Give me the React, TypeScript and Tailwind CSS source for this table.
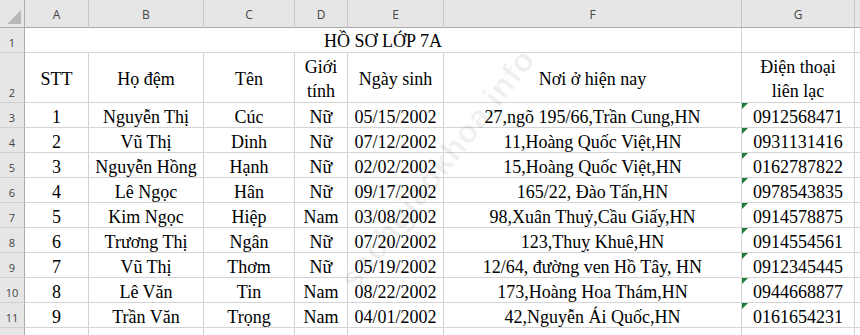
import React from 'react';

const cols = ['A', 'B', 'C', 'D', 'E', 'F', 'G'];

const rows = [
  ['1', 'Nguyễn Thị', 'Cúc', 'Nữ', '05/15/2002', '27,ngõ 195/66,Trần Cung,HN', '0912568471'],
  ['2', 'Vũ Thị', 'Dinh', 'Nữ', '07/12/2002', '11,Hoàng Quốc Việt,HN', '0931131416'],
  ['3', 'Nguyễn Hồng', 'Hạnh', 'Nữ', '02/02/2002', '15,Hoàng Quốc Việt,HN', '0162787822'],
  ['4', 'Lê Ngọc', 'Hân', 'Nữ', '09/17/2002', '165/22, Đào Tấn,HN', '0978543835'],
  ['5', 'Kim Ngọc', 'Hiệp', 'Nam', '03/08/2002', '98,Xuân Thuỷ,Cầu Giấy,HN', '0914578875'],
  ['6', 'Trương Thị', 'Ngân', 'Nữ', '07/20/2002', '123,Thuỵ Khuê,HN', '0914554561'],
  ['7', 'Vũ Thị', 'Thơm', 'Nữ', '05/19/2002', '12/64, đường ven Hồ Tây, HN', '0912345445'],
  ['8', 'Lê Văn', 'Tin', 'Nam', '08/22/2002', '173,Hoàng Hoa Thám,HN', '0944668877'],
  ['9', 'Trần Văn', 'Trọng', 'Nam', '04/01/2002', '42,Nguyễn Ái Quốc,HN', '0161654231'],
];

function RowHead({ n, h }: { n: string; h: string }) {
  return (
    <div
      className={`${h} flex items-end justify-center pb-[4px] bg-[#e6e6e6] border-r border-r-[#ababab] border-b border-b-[#d0d0d0] text-[11px] leading-none text-[#444] font-['Open_Sans',sans-serif]`}
    >
      {n}
    </div>
  );
}

function Cell({ children, flag }: { children?: React.ReactNode; flag?: boolean }) {
  return (
    <div className="relative h-[25px] flex items-center justify-center pt-[3px] border-r border-b border-[#d4d4d4] text-[18px] leading-none text-black whitespace-nowrap">
      {flag && (
        <svg className="absolute left-0 top-0" width="6" height="6" viewBox="0 0 6 6">
          <polygon points="0,0 6,0 0,6" fill="#1e7b3c" />
        </svg>
      )}
      {children}
    </div>
  );
}

export default function App() {
  return (
    <div className="relative w-[860px] h-[335px] overflow-hidden bg-white font-['Liberation_Serif',serif]">
      <div className="grid grid-cols-[25px_64px_115px_91px_53px_96px_298px_113px_1fr]">
        {/* column header */}
        <div className="relative h-[28px] bg-[#e6e6e6] border-r border-b border-[#ababab]">
          <svg className="absolute right-[3px] bottom-[3px]" width="14" height="14" viewBox="0 0 14 14">
            <polygon points="14,0 14,14 0,14" fill="#b8b8b8" />
          </svg>
        </div>
        {cols.map((c) => (
          <div
            key={c}
            className="h-[28px] flex items-center justify-center pt-[2px] bg-[#e6e6e6] border-r border-r-[#c6c6c6] border-b border-b-[#ababab] text-[12px] text-[#444] font-['Open_Sans',sans-serif]"
          >
            {c}
          </div>
        ))}
        <div className="h-[28px] bg-[#e6e6e6] border-b border-b-[#ababab]" />

        {/* row 1 */}
        <RowHead n="1" h="h-[25px]" />
        <div className="col-span-6 h-[25px] flex items-center justify-center pt-[2px] border-r border-b border-[#d4d4d4] text-[18px] leading-none">
          HỒ SƠ LỚP 7A
        </div>
        <Cell />
        <div className="h-[25px] border-b border-[#d4d4d4]" />

        {/* row 2 */}
        <RowHead n="2" h="h-[50px]" />
        {['STT', 'Họ đệm', 'Tên'].map((t) => (
          <div key={t} className="h-[50px] flex items-center justify-center pt-[2px] border-r border-b border-[#d4d4d4] text-[18px] leading-none">
            {t}
          </div>
        ))}
        <div className="h-[50px] flex flex-col items-center justify-center pt-[2px] border-r border-b border-[#d4d4d4] text-[18px] leading-[24px]">
          <span>Giới</span>
          <span>tính</span>
        </div>
        {['Ngày sinh', 'Nơi ở hiện nay'].map((t) => (
          <div key={t} className="h-[50px] flex items-center justify-center pt-[2px] border-r border-b border-[#d4d4d4] text-[18px] leading-none">
            {t}
          </div>
        ))}
        <div className="h-[50px] flex flex-col items-center justify-center pt-[2px] border-r border-b border-[#d4d4d4] text-[18px] leading-[24px]">
          <span>Điện thoại</span>
          <span>liên lạc</span>
        </div>
        <div className="h-[50px] border-b border-[#d4d4d4]" />

        {/* data rows */}
        {rows.map((r, i) => (
          <React.Fragment key={i}>
            <RowHead n={String(i + 3)} h="h-[25px]" />
            {r.map((v, j) => (
              <Cell key={j} flag={j === 6}>
                {v}
              </Cell>
            ))}
            <div className="h-[25px] border-b border-[#d4d4d4]" />
          </React.Fragment>
        ))}

        {/* row 12 partial */}
        <div className="h-[25px] bg-[#e6e6e6] border-r border-r-[#ababab]" />
        {cols.map((c) => (
          <div key={c} className="h-[25px] border-r border-[#d4d4d4]" />
        ))}
        <div className="h-[25px]" />
      </div>

      {/* watermark */}
      <div className="pointer-events-none absolute left-[290px] top-[145px] -rotate-[52deg] text-[32px] font-bold tracking-wide text-[#000]/[0.06] font-['Liberation_Sans',sans-serif] whitespace-nowrap">
        sachgiaokhoa.info
      </div>
    </div>
  );
}
